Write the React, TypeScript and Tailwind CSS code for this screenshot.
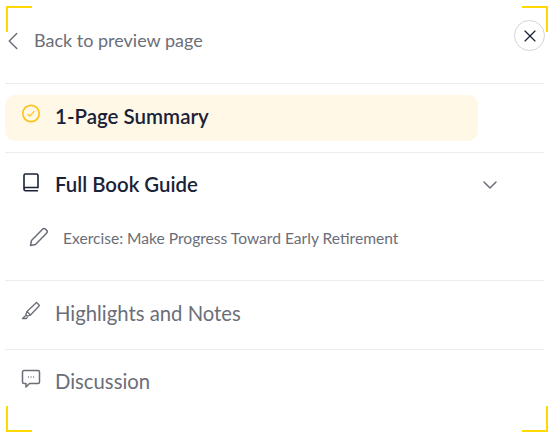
import { ChevronDown, ChevronLeft, X } from "lucide-react";

function BookIcon() {
  return (
    <svg width="18" height="20" viewBox="0 0 18 20" fill="none" stroke="#1a2238" strokeWidth="1.600">
      <path d="M2 15.500V2.500a1.500 1.500 0 0 1 1.500-1.500h11A1.500 1.500 0 0 1 16 2.500v12H3.500A1.500 1.500 0 0 0 2 16a1.600 1.600 0 0 0 1.500 1.700H16" />
    </svg>
  );
}

function CheckIcon() {
  return (
    <svg width="20" height="20" viewBox="0 0 20 20" fill="none" stroke="#fcc419" strokeWidth="1.700">
      <circle cx="10" cy="9.500" r="8.200" />
      <path d="M6.500 10l2.400 2.200 4.400-5" strokeWidth="1.100" />
    </svg>
  );
}

function PencilIcon() {
  return (
    <svg width="20" height="20" viewBox="0 0 20 20" fill="none" stroke="#6b6e78" strokeWidth="1.500" strokeLinejoin="round">
      <path d="M1.500 18.500l1-5L13.500 2.200a2.200 2.200 0 0 1 3.100 0l.9.9a2.200 2.200 0 0 1 0 3.100L6.500 17.500z" />
    </svg>
  );
}

function MarkerIcon() {
  return (
    <svg width="20" height="20" viewBox="0 0 20 20" fill="none" stroke="#6b6e78" strokeWidth="1.300" strokeLinejoin="round">
      <path d="M6 10.500L15.500 1.500l3 3L9.500 14z" />
      <path d="M6 10.500l-1.300 3.200 1.600 1.500L9.500 14" />
      <path d="M4.700 14.500L1.500 17.500h4l1-1.500" />
    </svg>
  );
}

function ChatIcon() {
  return (
    <svg width="20" height="20" viewBox="0 0 20 20" fill="none" stroke="#6b6e78" strokeWidth="1.500" strokeLinejoin="round">
      <path d="M3 1.500h14A1.500 1.500 0 0 1 18.500 3v10a1.500 1.500 0 0 1-1.500 1.500H8.500L5 18v-3.500H3A1.500 1.500 0 0 1 1.500 13V3A1.500 1.500 0 0 1 3 1.500z" />
      <path d="M7 8h.9M9.600 8h.9M12.200 8h.9" strokeWidth="1.500" />
    </svg>
  );
}

function Corner({ className }: { className: string }) {
  return <div className={`absolute h-[26px] w-[26px] border-[#ffd900] ${className}`} />;
}

export default function App() {
  return (
    <div className="relative h-[438px] w-[554px] overflow-hidden bg-white font-['Lato',sans-serif]">
      <Corner className="left-[6px] top-[6px] border-l-2 border-t-2" />
      <Corner className="left-[522px] top-[6px] border-r-2 border-t-2" />
      <Corner className="left-[6px] top-[406px] border-b-2 border-l-2" />
      <Corner className="left-[522px] top-[406px] border-b-2 border-r-2" />

      <div className="ml-[5px] w-[539px]">
        <header className="relative flex h-[84px] items-center border-b border-[#ececee] pb-[2px]">
          <ChevronLeft size={30} strokeWidth={1.200} color="#6b6e78" className="ml-[-7px]" />
          <span className="ml-[6px] text-[18px] text-[#6b6e78]">Back to preview page</span>
          <button className="absolute right-[-1px] top-[20px] flex h-[31px] w-[31px] items-center justify-center rounded-full border border-[#d4d4d8] bg-white">
            <X size={20} strokeWidth={1.400} color="#1a2238" />
          </button>
        </header>

        <div className="h-[69px] border-b border-[#ececee] pt-[11px]">
          <div className="flex h-[46px] w-[473px] items-center rounded-[10px] bg-[#fff8e6] pl-[16px]">
            <span className="mt-[-8px]"><CheckIcon /></span>
            <span className="mb-[4px] ml-[14px] text-[20.500px] font-semibold text-[#1a2238]">1-Page Summary</span>
          </div>
        </div>

        <div className="h-[128px] border-b border-[#ececee] pl-[17px]">
          <div className="flex h-[64px] items-center pr-[42px]">
            <span className="mt-[-4px]"><BookIcon /></span>
            <span className="mb-[2px] ml-[15px] text-[20.400px] font-semibold text-[#1a2238]">Full Book Guide</span>
            <ChevronDown size={24} strokeWidth={1.500} color="#6b6e78" className="ml-auto" />
          </div>
          <div className="mt-[10px] flex items-center pl-[7px]">
            <span className="mt-[-4px]"><PencilIcon /></span>
            <span className="mb-[1px] ml-[14px] text-[15.600px] text-[#6b6e78]">Exercise: Make Progress Toward Early Retirement</span>
          </div>
        </div>

        <div className="flex h-[69px] items-center border-b border-[#ececee] pl-[16px]">
          <span className="mt-[-9px]"><MarkerIcon /></span>
          <span className="mb-[4px] ml-[14px] text-[20.300px] text-[#6b6e78]">Highlights and Notes</span>
        </div>

        <div className="flex h-[65px] items-center pl-[16px]">
          <span className="mt-[-8px]"><ChatIcon /></span>
          <span className="mb-[2px] ml-[14px] text-[20.300px] text-[#6b6e78]">Discussion</span>
        </div>
      </div>
    </div>
  );
}
